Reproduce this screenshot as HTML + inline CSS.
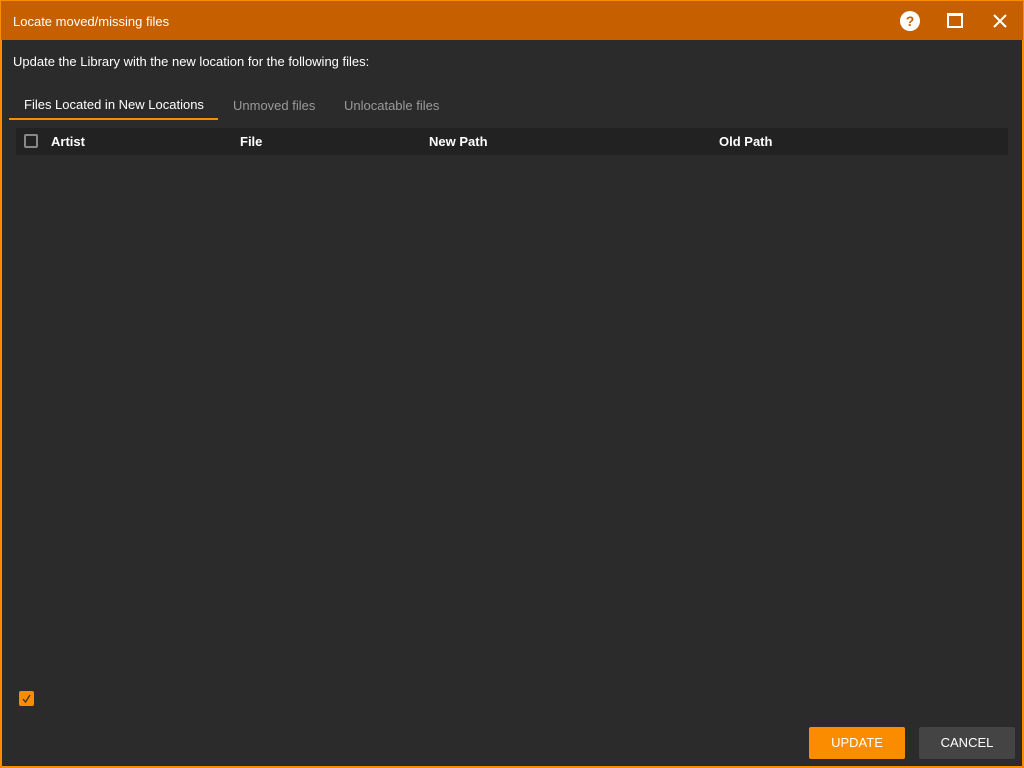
<!DOCTYPE html>
<html><head><style>
*{margin:0;padding:0;box-sizing:border-box}
body{width:1024px;height:768px;background:#2b2b2b;font-family:"Liberation Sans",sans-serif;position:relative;overflow:hidden}
.frame{position:absolute;inset:0;border:2px solid #fb8c00;border-top:1px solid #fb8c00}
.title{position:absolute;left:1px;top:1px;right:1px;height:39px;background:#c55f00;color:#fff;font-size:13px;line-height:42px;padding-left:12px}
.t{position:absolute;color:#fff;font-size:13px}
.hdr{position:absolute;left:16px;top:128px;width:992px;height:27px;background:#222}
.hdr span{position:absolute;top:6px;color:#fff;font-weight:bold;font-size:13px}
.btn{position:absolute;top:727px;height:32px;font-size:13px;color:#fff;text-align:center;line-height:32px;border-radius:2px}
</style></head><body>
<div class="frame"></div>
<div class="title">Locate moved/missing files</div>
<svg style="position:absolute;left:899px;top:10px" width="22" height="22" viewBox="0 0 22 22"><circle cx="11" cy="11" r="10" fill="#fff"/><text x="11" y="16" text-anchor="middle" font-family="Liberation Sans" font-weight="bold" font-size="14" fill="#c55f00">?</text></svg>
<div style="position:absolute;left:947px;top:13px;width:16px;height:15px;border:2px solid #fff;border-top-width:3px"></div>
<svg style="position:absolute;left:992px;top:13px" width="16" height="16"><path d="M2 2L14 14M14 2L2 14" stroke="#fff" stroke-width="2"/></svg>
<div class="t" style="left:13px;top:54px">Update the Library with the new location for the following files:</div>
<div class="t" style="left:24px;top:97px">Files Located in New Locations</div>
<div style="position:absolute;left:9px;top:118px;width:209px;height:2px;background:#fb8c00"></div>
<div class="t" style="left:233px;top:98px;color:#9a9a9a">Unmoved files</div>
<div class="t" style="left:344px;top:98px;color:#9a9a9a">Unlocatable files</div>
<div class="hdr">
<div style="position:absolute;left:8px;top:6px;width:14px;height:14px;border:2px solid #888;border-radius:2px"></div>
<span style="left:35px">Artist</span><span style="left:224px">File</span><span style="left:413px">New Path</span><span style="left:703px">Old Path</span>
</div>
<div style="position:absolute;left:19px;top:691px;width:15px;height:15px;background:#fb8c00;border-radius:2px"><svg width="15" height="15"><path d="M4 8L6.5 11L11 4" stroke="#333" stroke-width="1.3" fill="none"/></svg></div>
<div class="btn" style="left:809px;width:96px;background:#fb8c00">UPDATE</div>
<div class="btn" style="left:919px;width:96px;background:#444">CANCEL</div>
</body></html>
